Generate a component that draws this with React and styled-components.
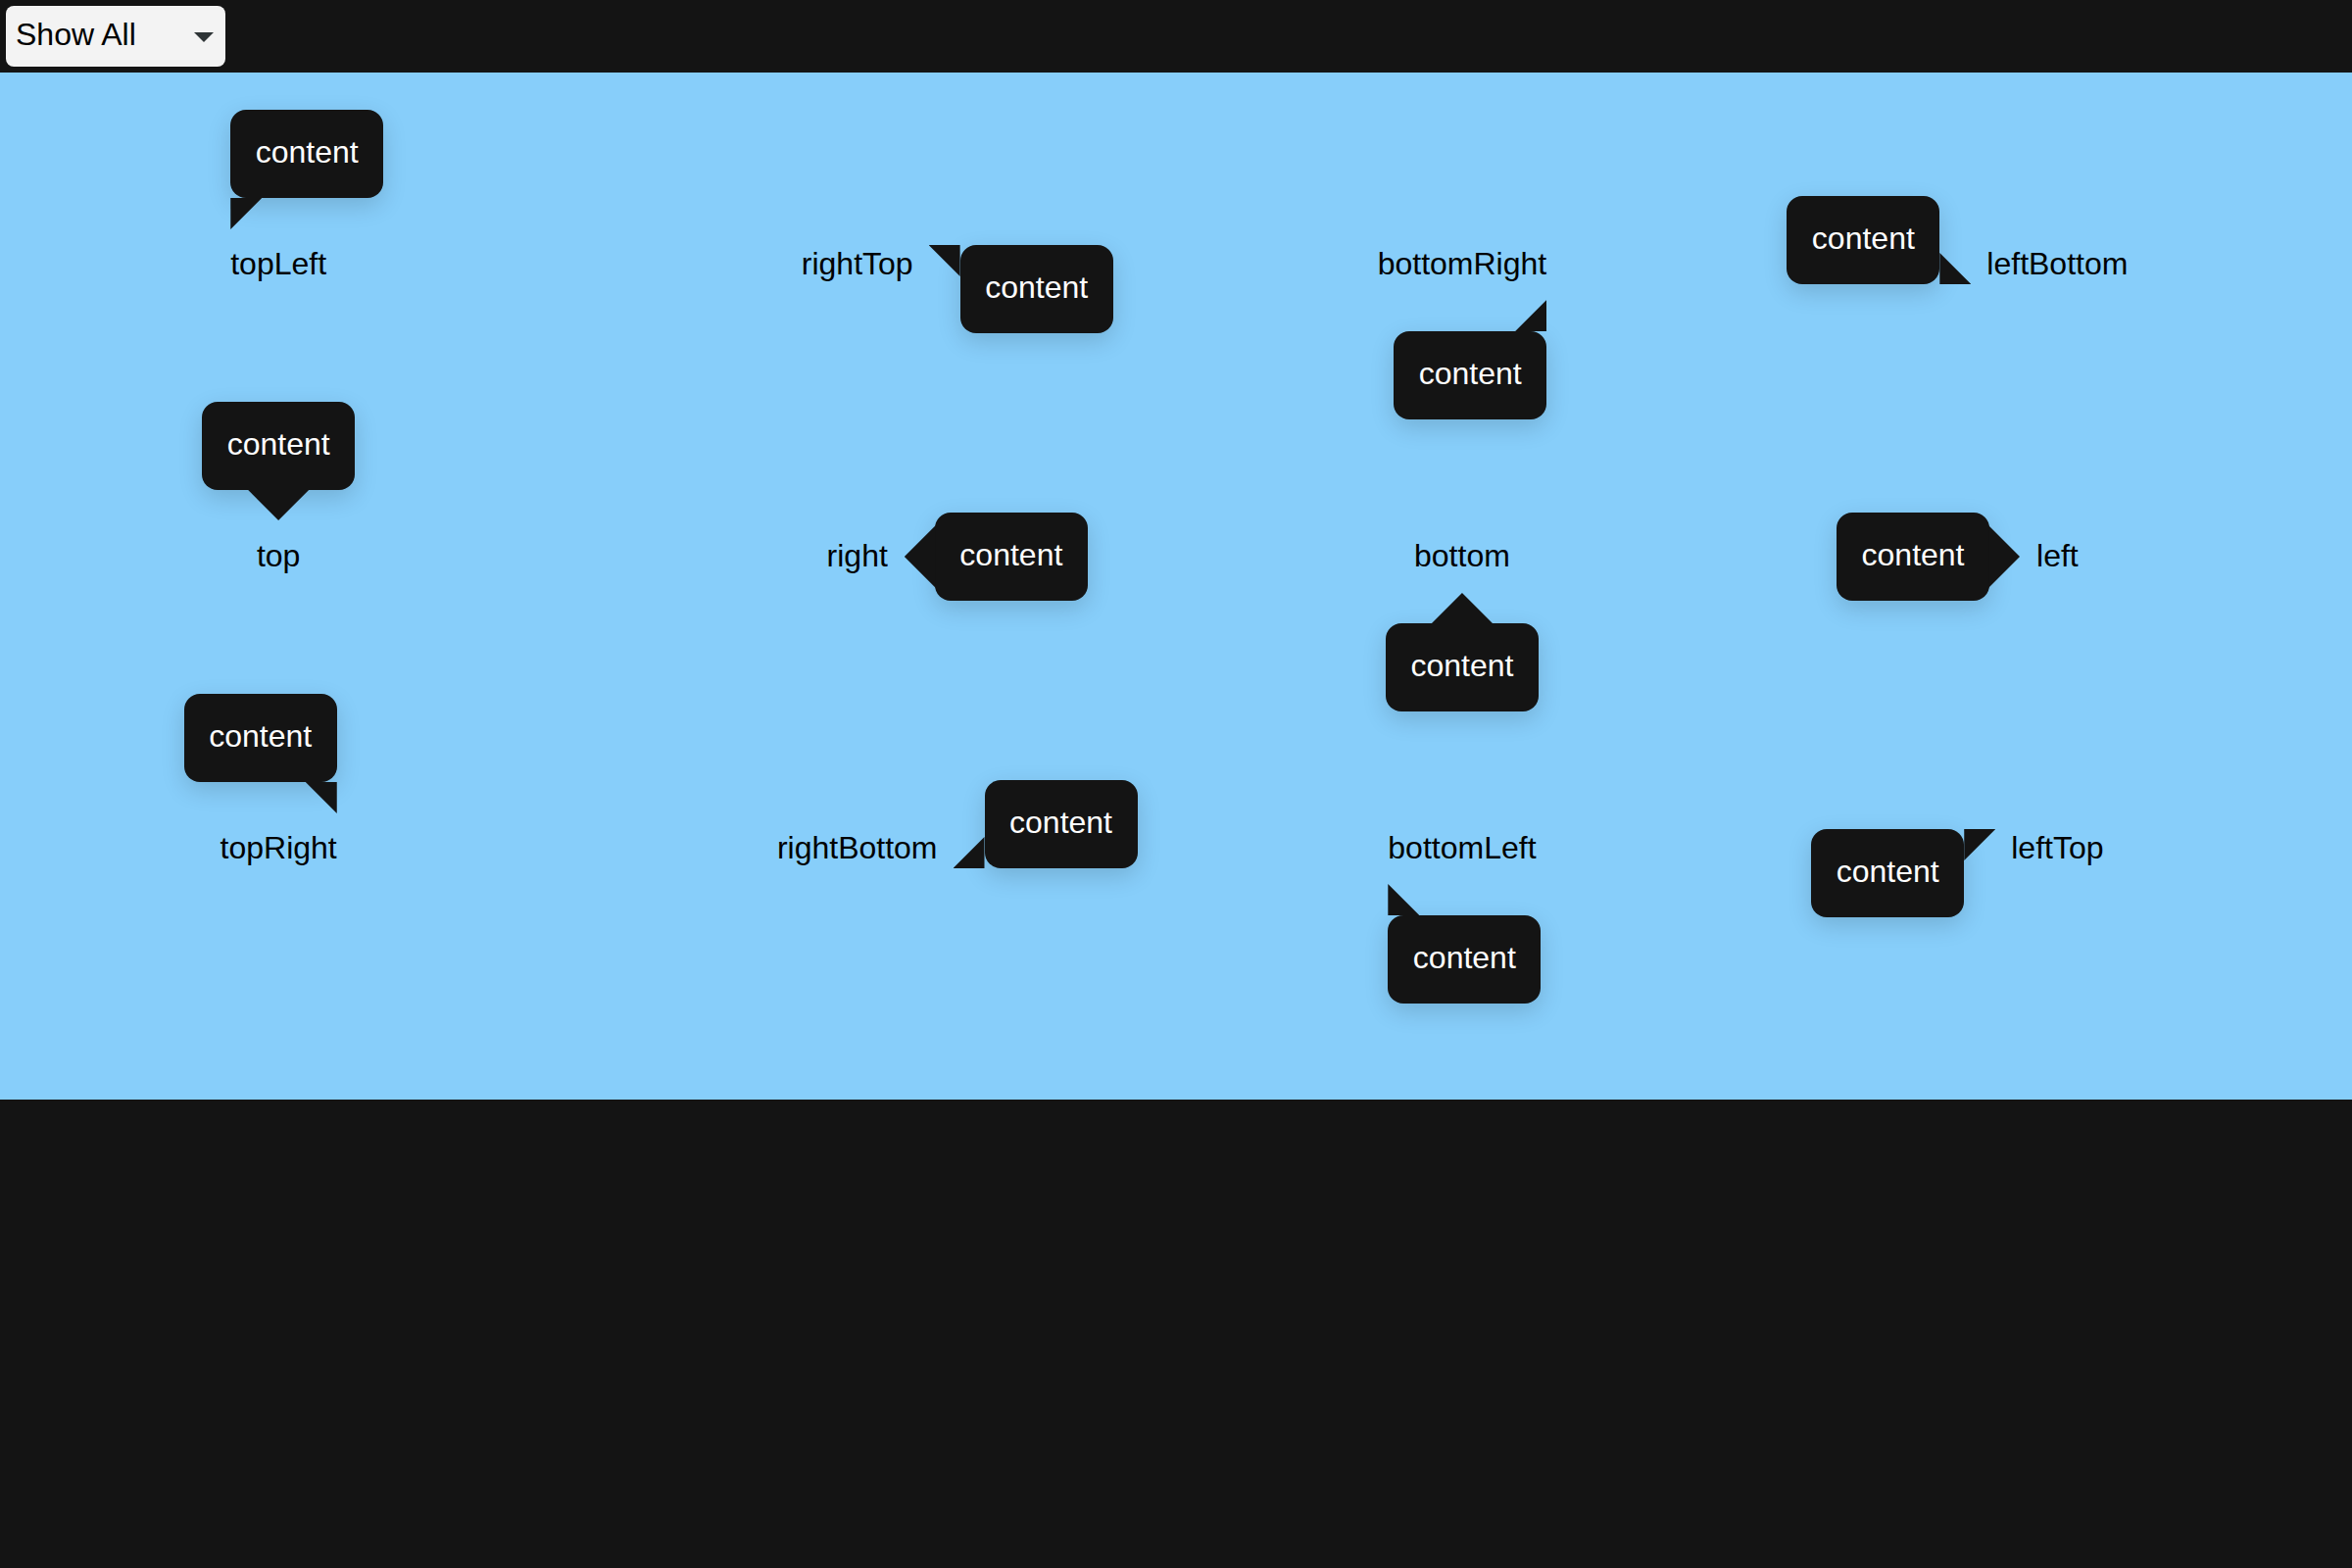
import React, { useState } from "react";
import styled, { createGlobalStyle, css } from "styled-components";

const GlobalStyle = createGlobalStyle`
  * {
    box-sizing: border-box;
  }

  body {
    margin: 0;
    background: #141414;
    color: #000;
    font-family: "Liberation Sans", Arial, sans-serif;
    font-size: 32px;
    line-height: 40px;
  }
`;

const Toolbar = styled.header`
  display: flex;
  padding: 6px;
`;

const SelectBox = styled.div`
  position: relative;
  display: flex;
`;

const Select = styled.select`
  appearance: none;
  width: 224px;
  height: 62px;
  padding: 0 44px 4px 10px;
  border: 0;
  border-radius: 8px;
  background: #f3f3f3;
  color: #000;
  font-family: inherit;
  font-size: 32px;
`;

const Caret = styled.svg`
  position: absolute;
  right: 12px;
  top: 27px;
  width: 20px;
  height: 10px;
  fill: #2e3436;
  pointer-events: none;
`;

const Stage = styled.main`
  display: flex;
  justify-content: space-around;
  padding: 176px 4px 236px 0;
  background: #87cefa;
`;

const Column = styled.section`
  display: flex;
  flex-direction: column;
  align-items: center;
  gap: 258px;
`;

const Anchor = styled.div`
  position: relative;
  padding-bottom: 2px;
  line-height: 38px;
  white-space: nowrap;
`;

const GAP = "calc(100% + 48px)";

const bubblePlace = {
  topLeft: css`bottom: ${GAP}; left: 0;`,
  top: css`bottom: ${GAP}; left: 50%; transform: translateX(-50%);`,
  topRight: css`bottom: ${GAP}; right: 0;`,
  rightTop: css`left: ${GAP}; top: 0;`,
  right: css`left: ${GAP}; top: 50%; transform: translateY(-50%);`,
  rightBottom: css`left: ${GAP}; bottom: 0;`,
  bottomRight: css`top: ${GAP}; right: 0;`,
  bottom: css`top: ${GAP}; left: 50%; transform: translateX(-50%);`,
  bottomLeft: css`top: ${GAP}; left: 0;`,
  leftBottom: css`right: ${GAP}; bottom: 0;`,
  left: css`right: ${GAP}; top: 50%; transform: translateY(-50%);`,
  leftTop: css`right: ${GAP}; top: 0;`,
};

// Centred tails reach one pixel under the bubble so that no seam shows.
const EDGE = "calc(100% - 1px)";
const MIDDLE = "calc(50% - 32px)";

const wide = css`width: 64px; height: 32px; left: ${MIDDLE};`;
const tall = css`width: 32px; height: 64px; top: ${MIDDLE};`;
const corner = css`width: 32px; height: 32px;`;

const tailPlace = {
  topLeft: css`${corner} top: 100%; left: 0; clip-path: polygon(0 0, 100% 0, 0 100%);`,
  top: css`${wide} top: ${EDGE}; clip-path: polygon(0 0, 100% 0, 50% 100%);`,
  topRight: css`${corner} top: 100%; right: 0; clip-path: polygon(0 0, 100% 0, 100% 100%);`,
  rightTop: css`${corner} right: 100%; top: 0; clip-path: polygon(0 0, 100% 0, 100% 100%);`,
  right: css`${tall} right: ${EDGE}; clip-path: polygon(100% 0, 100% 100%, 0 50%);`,
  rightBottom: css`${corner} right: 100%; bottom: 0; clip-path: polygon(100% 0, 100% 100%, 0 100%);`,
  bottomRight: css`${corner} bottom: 100%; right: 0; clip-path: polygon(100% 0, 100% 100%, 0 100%);`,
  bottom: css`${wide} bottom: ${EDGE}; clip-path: polygon(0 100%, 100% 100%, 50% 0);`,
  bottomLeft: css`${corner} bottom: 100%; left: 0; clip-path: polygon(0 0, 100% 100%, 0 100%);`,
  leftBottom: css`${corner} left: 100%; bottom: 0; clip-path: polygon(0 0, 100% 100%, 0 100%);`,
  left: css`${tall} left: ${EDGE}; clip-path: polygon(0 0, 0 100%, 100% 50%);`,
  leftTop: css`${corner} left: 100%; top: 0; clip-path: polygon(0 0, 100% 0, 0 100%);`,
};

const Bubble = styled.div`
  position: absolute;
  min-width: 156px;
  padding: 23px 24px 27px;
  border-radius: 16px;
  background: #141414;
  color: #fff;
  line-height: 40px;
  text-align: center;
  box-shadow: 0 8px 24px rgba(0, 0, 0, 0.15);
  ${({ $placement }) => bubblePlace[$placement]}

  &::after {
    content: "";
    position: absolute;
    background: #141414;
    ${({ $placement }) => tailPlace[$placement]}
  }
`;

const columns = [
  ["topLeft", "top", "topRight"],
  ["rightTop", "right", "rightBottom"],
  ["bottomRight", "bottom", "bottomLeft"],
  ["leftBottom", "left", "leftTop"],
];

function Popover({ placement, open }) {
  return (
    <Anchor>
      <span aria-describedby={`tip-${placement}`}>{placement}</span>
      {open && (
        <Bubble id={`tip-${placement}`} role="tooltip" $placement={placement}>
          content
        </Bubble>
      )}
    </Anchor>
  );
}

export default function App() {
  const [shown, setShown] = useState("all");

  return (
    <>
      <GlobalStyle />
      <Toolbar>
        <SelectBox>
          <Select
            aria-label="Visible popovers"
            value={shown}
            onChange={(event) => setShown(event.target.value)}
          >
            <option value="all">Show All</option>
            {columns.flat().map((placement) => (
              <option key={placement} value={placement}>
                {placement}
              </option>
            ))}
          </Select>
          <Caret viewBox="0 0 20 10" aria-hidden="true">
            <path d="M0 0h20L10 10z" />
          </Caret>
        </SelectBox>
      </Toolbar>
      <Stage>
        {columns.map((placements) => (
          <Column key={placements[0]}>
            {placements.map((placement) => (
              <Popover
                key={placement}
                placement={placement}
                open={shown === "all" || shown === placement}
              />
            ))}
          </Column>
        ))}
      </Stage>
    </>
  );
}
